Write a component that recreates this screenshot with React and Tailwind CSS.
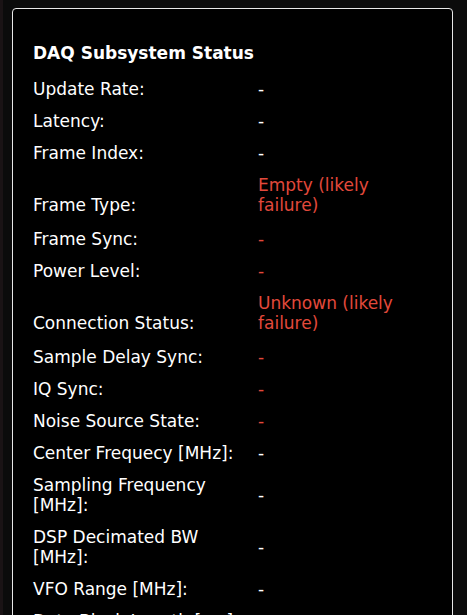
import React from 'react';

const rows = [
  { label: 'Update Rate:', value: '-' },
  { label: 'Latency:', value: '-' },
  { label: 'Frame Index:', value: '-' },
  { label: 'Frame Type:', value: 'Empty (likely failure)', bad: true, tall: true },
  { label: 'Frame Sync:', value: '-', bad: true },
  { label: 'Power Level:', value: '-', bad: true },
  { label: 'Connection Status:', value: 'Unknown (likely failure)', bad: true, tall: true },
  { label: 'Sample Delay Sync:', value: '-', bad: true },
  { label: 'IQ Sync:', value: '-', bad: true },
  { label: 'Noise Source State:', value: '-', bad: true },
  { label: 'Center Frequecy [MHz]:', value: '-' },
  { label: 'Sampling Frequency [MHz]:', value: '-' },
  { label: 'DSP Decimated BW [MHz]:', value: '-' },
  { label: 'VFO Range [MHz]:', value: '-' },
  { label: 'Data Block Length [ms]:', value: '-' },
];

export default function App() {
  return (
    <div className="flex h-[615px] overflow-hidden bg-[#0b0b0b] font-['DejaVu_Sans',sans-serif] text-[17px] leading-5 text-white">
      <div className="w-[3px] shrink-0 bg-[#1a1315]" />
      <div className="flex-1 pl-[9px] pr-[14px] pt-2">
        {/* DAQ status card */}
        <div className="rounded-[4px] border border-[#e8e8e8] bg-black px-5 pb-8 pt-[34px]">
          <h3 className="mb-4 font-bold">DAQ Subsystem Status</h3>
          <div className="flex flex-col gap-3">
            {rows.map((r, i) => (
              <div
                key={i}
                className={r.tall ? 'flex items-end pb-0.5' : 'flex items-center'}
              >
                <div className="w-[225px] shrink-0 pr-1">{r.label}</div>
                <div className={r.bad ? 'w-[160px] text-[#e2493b]' : 'w-[160px]'}>{r.value}</div>
              </div>
            ))}
          </div>
        </div>
      </div>
    </div>
  );
}
